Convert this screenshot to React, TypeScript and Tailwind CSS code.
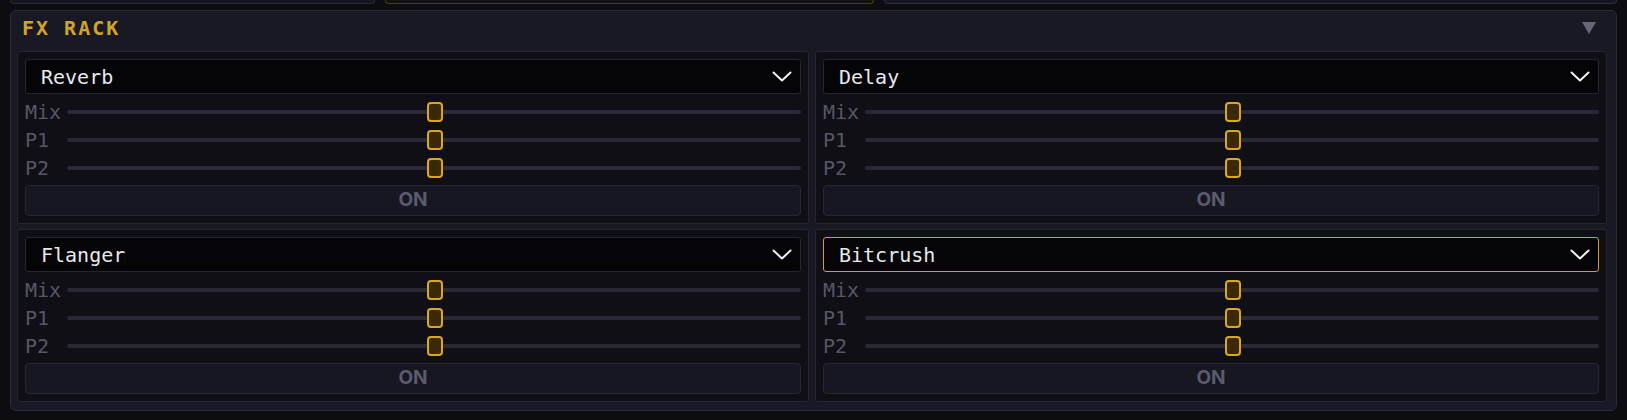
import React from 'react';

const mono = { fontFamily: '"DejaVu Sans Mono", "Liberation Mono", monospace' };

interface FxSlot {
    name: string;
    focused?: boolean;
}

const slots: FxSlot[] = [
    { name: 'Reverb' },
    { name: 'Delay' },
    { name: 'Flanger' },
    { name: 'Bitcrush', focused: true },
];

const params = ['Mix', 'P1', 'P2'];

function Chevron() {
    return (
        <svg width="20" height="11" viewBox="0 0 20 11" fill="none" className="shrink-0">
            <polyline points="1.5,1.5 10,9.5 18.5,1.5" stroke="#f2f2f5" strokeWidth="2" strokeLinecap="round" strokeLinejoin="round" />
        </svg>
    );
}

function ParamRow({ label, value }: { label: string; value: number }) {
    return (
        <div className="flex h-[28px] items-center">
            <span className="w-[42px] shrink-0 text-[20px] leading-[28px] text-[#575764]" style={mono}>
                {label}
            </span>
            <div className="relative flex h-[20px] flex-1 items-center">
                <div className="h-[4px] w-full rounded-full bg-[#292936]" />
                <div
                    className="absolute top-0 h-[20px] w-[16px] -translate-x-1/2 rounded-[4px] border-2 border-[#d9a81e] bg-[#3a2906]"
                    style={{ left: `${value}%` }}
                />
            </div>
        </div>
    );
}

function FxCard({ slot }: { slot: FxSlot }) {
    return (
        <div className="flex flex-col rounded-[3px] border border-[#262633] bg-[#0f0f15] px-[7px] pt-[7px] pb-[7px]">
            <div
                className={
                    'flex h-[35px] items-center justify-between rounded-[3px] border bg-[#050507] pl-[15px] pr-[8px] ' +
                    (slot.focused ? 'border-[#d2a02a]' : 'border-[#262632]')
                }
            >
                <span className="text-[20px] text-[#e8e8ec]" style={mono}>
                    {slot.name}
                </span>
                <Chevron />
            </div>
            <div className="mt-[4px] flex flex-col">
                {params.map((p) => (
                    <ParamRow key={p} label={p} value={50.2} />
                ))}
            </div>
            <button
                className="mt-[3px] flex h-[31px] items-center justify-center rounded-[4px] border border-[#272735] bg-[#171721] text-[19px] font-bold text-[#5b5b6e]"
                style={{ fontFamily: 'Inter, "Liberation Sans", sans-serif' }}
            >
                ON
            </button>
        </div>
    );
}

export default function App() {
    return (
        <div className="min-h-[420px] w-[1627px] bg-[#0c0c11] px-[10px]">
            {/* bottoms of the panels above */}
            <div className="flex h-[4px] gap-[10px]">
                <div className="h-[4px] w-[365px] rounded-b-[6px] border-x border-b border-[#2a2a38] bg-[#15151e]" />
                <div className="h-[4px] w-[489px] rounded-b-[6px] border-x border-b border-[#4b3d12] bg-[#121109]" />
                <div className="h-[4px] flex-1 rounded-b-[6px] border-x border-b border-[#2e2e40] bg-[#15151e]" />
            </div>

            <div className="mt-[6px] rounded-[6px] border border-[#2b2b3a] bg-[#191923] pt-[3px] pr-[9px] pb-[8px] pl-[6px]">
                <div className="mb-[9px] flex h-[28px] items-center justify-between pl-[5px] pr-[11px]">
                    <span className="text-[20px] font-bold tracking-[0.1em] text-[#d1a32a]" style={mono}>
                        FX RACK
                    </span>
                    <svg width="14" height="12" viewBox="0 0 14 12">
                        <polygon points="0,0 14,0 7,12" fill="#676778" />
                    </svg>
                </div>
                <div className="grid grid-cols-2 gap-x-[6px] gap-y-[5px]">
                    {slots.map((s) => (
                        <FxCard key={s.name} slot={s} />
                    ))}
                </div>
            </div>
        </div>
    );
}
